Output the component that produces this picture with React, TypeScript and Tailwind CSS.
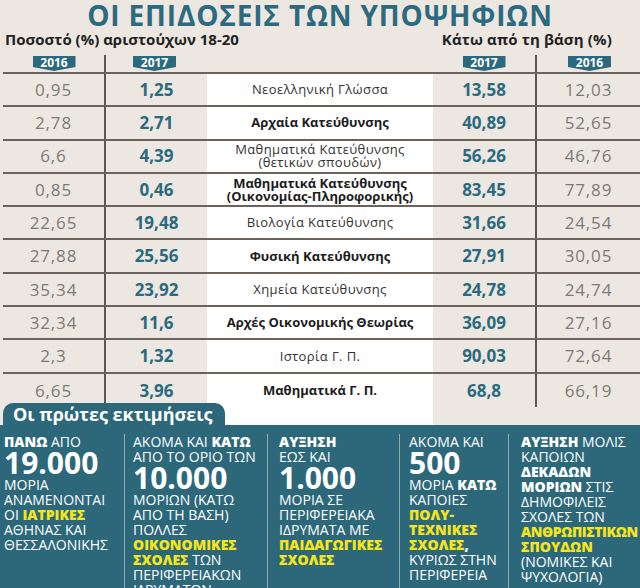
import React from "react";

type Row = {
  a16: string;
  a17: string;
  subject: string[];
  bold: boolean;
  b17: string;
  b16: string;
};

const rows: Row[] = [
  { a16: "0,95", a17: "1,25", subject: ["Νεοελληνική Γλώσσα"], bold: false, b17: "13,58", b16: "12,03" },
  { a16: "2,78", a17: "2,71", subject: ["Αρχαία Κατεύθυνσης"], bold: true, b17: "40,89", b16: "52,65" },
  { a16: "6,6", a17: "4,39", subject: ["Μαθηματικά Κατεύθυνσης", "(θετικών σπουδών)"], bold: false, b17: "56,26", b16: "46,76" },
  { a16: "0,85", a17: "0,46", subject: ["Μαθηματικά Κατεύθυνσης", "(Οικονομίας-Πληροφορικής)"], bold: true, b17: "83,45", b16: "77,89" },
  { a16: "22,65", a17: "19,48", subject: ["Βιολογία Κατεύθυνσης"], bold: false, b17: "31,66", b16: "24,54" },
  { a16: "27,88", a17: "25,56", subject: ["Φυσική Κατεύθυνσης"], bold: true, b17: "27,91", b16: "30,05" },
  { a16: "35,34", a17: "23,92", subject: ["Χημεία Κατεύθυνσης"], bold: false, b17: "24,78", b16: "24,74" },
  { a16: "32,34", a17: "11,6", subject: ["Αρχές Οικονομικής Θεωρίας"], bold: true, b17: "36,09", b16: "27,16" },
  { a16: "2,3", a17: "1,32", subject: ["Ιστορία Γ. Π."], bold: false, b17: "90,03", b16: "72,64" },
  { a16: "6,65", a17: "3,96", subject: ["Μαθηματικά Γ. Π."], bold: true, b17: "68,8", b16: "66,19" },
];

function Badge({ year }: { year: string }) {
  return (
    <div className="mt-[1px] flex h-[15px] w-[43px] justify-center bg-[#2b6a7e] pt-[1px] text-[12px] font-bold leading-[11px] text-white [clip-path:polygon(0_0,100%_0,100%_74%,50%_100%,0_74%)]">
      {year}
    </div>
  );
}

function B({ children }: { children: React.ReactNode }) {
  return <span className="font-extrabold">{children}</span>;
}

function Y({ children }: { children: React.ReactNode }) {
  return <span className="font-extrabold text-[#f4e51c]">{children}</span>;
}

function Big({ children }: { children: React.ReactNode }) {
  return <div className="text-[30px] font-bold leading-[28px]">{children}</div>;
}

export default function App() {
  return (
    <div className="h-[588px] w-[640px] overflow-hidden bg-[#ece8e1] font-['Open_Sans',sans-serif]">
      <h1 className="pt-[1px] text-center text-[28px] font-bold leading-[28px] tracking-[0.03em] text-[#2b6a7f]">
        ΟΙ ΕΠΙΔΟΣΕΙΣ ΤΩΝ ΥΠΟΨΗΦΙΩΝ
      </h1>
      <div className="mt-[1px] flex justify-between pl-[5px] pr-[28px] text-[15px] font-bold leading-[18px] text-[#222]">
        <span>Ποσοστό (%) αριστούχων 18-20</span>
        <span className="tracking-[0.01em]">Κάτω από τη βάση (%)</span>
      </div>

      {/* year badges */}
      <div className="ml-[3px] mt-[7px] grid h-[19px] grid-cols-[103px_101px_226px_104px_103px] border-b-2 border-[#6b635b]">
        <div className="flex justify-center border-r-2 border-[#5e564f] pl-[1px]">
          <Badge year="2016" />
        </div>
        <div className="flex justify-center pr-[4px]">
          <Badge year="2017" />
        </div>
        <div />
        <div className="flex justify-center border-r-2 border-[#5e564f]">
          <Badge year="2017" />
        </div>
        <div className="flex justify-center pl-[2px]">
          <Badge year="2016" />
        </div>
      </div>

      {/* table rows */}
      {rows.map((r, i) => (
        <div
          key={i}
          className={
            "ml-[3px] grid h-[33.3px] grid-cols-[103px_101px_226px_104px_103px] " +
            (i < rows.length - 1 ? "border-b-2 border-[#6b635b]" : "")
          }
        >
          <div className="flex items-center justify-center border-r-2 border-[#5e564f] text-[17px] tracking-[0.05em] text-[#7c7a76]">
            {r.a16}
          </div>
          <div className="flex items-center justify-center text-[17px] font-bold text-[#2b6a7f]">
            {r.a17}
          </div>
          <div
            className={
              "flex flex-col items-center justify-center bg-white text-[13px] leading-[13px] " +
              (r.bold ? "font-bold text-[#1c1c1c]" : "tracking-[0.03em] text-[#333]")
            }
          >
            {r.subject.map((s) => (
              <div key={s}>{s}</div>
            ))}
          </div>
          <div className="flex items-center justify-center border-r-2 border-[#5e564f] text-[17px] font-bold text-[#2b6a7f]">
            {r.b17}
          </div>
          <div className="flex items-center justify-center text-[17px] tracking-[0.05em] text-[#7c7a76]">
            {r.b16}
          </div>
        </div>
      ))}

      <div className="ml-[3px] grid h-[18px] grid-cols-[103px_101px_226px_104px_103px]">
        <div />
        <div />
        <div className="bg-white" />
        <div />
        <div />
      </div>

      {/* estimates panel */}
      <div className="relative h-[164px] bg-[#2c687a] pt-[9px] text-[14px] leading-[15px] text-white">
        <div className="absolute left-[3px] top-[-22px] h-[22px] w-[222px] rounded-t-[10px] bg-[#2c687a] pl-[10px] text-[18px] font-bold leading-[23px]">
          Οι πρώτες εκτιμήσεις
        </div>
        <div className="grid h-full grid-cols-[124px_143px_132px_109px_132px] whitespace-nowrap">
          <div className="pl-[4px]">
            <div>
              <B>ΠΑΝΩ</B> ΑΠΟ
            </div>
            <Big>19.000</Big>
            <div>ΜΟΡΙΑ</div>
            <div>ΑΝΑΜΕΝΟΝΤΑΙ</div>
            <div>
              ΟΙ <Y>ΙΑΤΡΙΚΕΣ</Y>
            </div>
            <div>ΑΘΗΝΑΣ ΚΑΙ</div>
            <div>ΘΕΣΣΑΛΟΝΙΚΗΣ</div>
          </div>
          <div className="border-l border-[#8eaeb6] pl-[8px]">
            <div>
              ΑΚΟΜΑ ΚΑΙ <B>ΚΑΤΩ</B>
            </div>
            <div>ΑΠΟ ΤΟ ΟΡΙΟ ΤΩΝ</div>
            <Big>10.000</Big>
            <div>ΜΟΡΙΩΝ (ΚΑΤΩ</div>
            <div>ΑΠΟ ΤΗ ΒΑΣΗ)</div>
            <div>ΠΟΛΛΕΣ</div>
            <div>
              <Y>ΟΙΚΟΝΟΜΙΚΕΣ</Y>
            </div>
            <div>
              <Y>ΣΧΟΛΕΣ</Y> ΤΩΝ
            </div>
            <div>ΠΕΡΙΦΕΡΕΙΑΚΩΝ</div>
            <div>ΙΔΡΥΜΑΤΩΝ</div>
          </div>
          <div className="border-l border-[#8eaeb6] pl-[11px]">
            <div>
              <B>ΑΥΞΗΣΗ</B>
            </div>
            <div>ΕΩΣ ΚΑΙ</div>
            <Big>1.000</Big>
            <div>ΜΟΡΙΑ ΣΕ</div>
            <div>ΠΕΡΙΦΕΡΕΙΑΚΑ</div>
            <div>ΙΔΡΥΜΑΤΑ ΜΕ</div>
            <div>
              <Y>ΠΑΙΔΑΓΩΓΙΚΕΣ</Y>
            </div>
            <div>
              <Y>ΣΧΟΛΕΣ</Y>
            </div>
          </div>
          <div className="border-l border-[#8eaeb6] pl-[9px]">
            <div>ΑΚΟΜΑ ΚΑΙ</div>
            <Big>500</Big>
            <div>
              ΜΟΡΙΑ <B>ΚΑΤΩ</B>
            </div>
            <div>ΚΑΠΟΙΕΣ</div>
            <div>
              <Y>ΠΟΛΥ-</Y>
            </div>
            <div>
              <Y>ΤΕΧΝΙΚΕΣ</Y>
            </div>
            <div>
              <Y>ΣΧΟΛΕΣ</Y>
              <B>,</B>
            </div>
            <div>ΚΥΡΙΩΣ ΣΤΗΝ</div>
            <div>ΠΕΡΙΦΕΡΕΙΑ</div>
          </div>
          <div className="border-l border-[#8eaeb6] pl-[12px]">
            <div>
              <B>ΑΥΞΗΣΗ</B> ΜΟΛΙΣ
            </div>
            <div>ΚΑΠΟΙΩΝ</div>
            <div>
              <B>ΔΕΚΑΔΩΝ</B>
            </div>
            <div>
              <B>ΜΟΡΙΩΝ</B> ΣΤΙΣ
            </div>
            <div>ΔΗΜΟΦΙΛΕΙΣ</div>
            <div>ΣΧΟΛΕΣ ΤΩΝ</div>
            <div className="tracking-[-0.03em]">
              <Y>ΑΝΘΡΩΠΙΣΤΙΚΩΝ</Y>
            </div>
            <div>
              <Y>ΣΠΟΥΔΩΝ</Y>
            </div>
            <div>(ΝΟΜΙΚΕΣ ΚΑΙ</div>
            <div>ΨΥΧΟΛΟΓΙΑ)</div>
          </div>
        </div>
      </div>
    </div>
  );
}
